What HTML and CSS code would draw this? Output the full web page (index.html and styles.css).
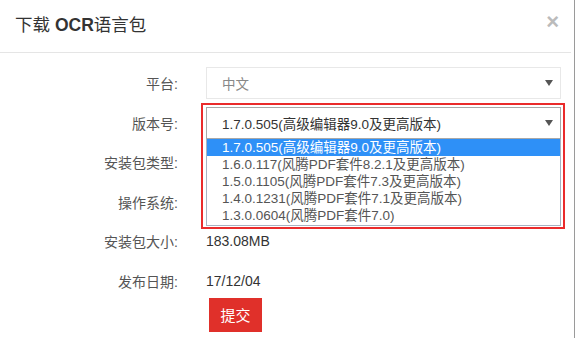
FILE: index.html
```html
<!DOCTYPE html>
<html lang="zh">
<head>
<meta charset="utf-8">
<link rel="stylesheet" href="styles.css">
</head>
<body>
<div class="modal">
  <div class="modal-header">
    <h4 class="title">下载 <b>OCR</b>语言包</h4>
    <span class="close">×</span>
  </div>
  <div class="modal-body">
    <div class="row">
      <span class="label">平台:</span>
      <div class="select muted">中文<i class="caret"></i></div>
    </div>
    <div class="row">
      <span class="label">版本号:</span>
      <div class="field">
        <div class="select open">1.7.0.505(高级编辑器9.0及更高版本)<i class="caret"></i></div>
        <ul class="dropdown">
          <li class="active">1.7.0.505(高级编辑器9.0及更高版本)</li>
          <li>1.6.0.117(风腾PDF套件8.2.1及更高版本)</li>
          <li>1.5.0.1105(风腾PDF套件7.3及更高版本)</li>
          <li>1.4.0.1231(风腾PDF套件7.1及更高版本)</li>
          <li>1.3.0.0604(风腾PDF套件7.0)</li>
        </ul>
        <div class="highlight"></div>
      </div>
    </div>
    <div class="row">
      <span class="label">安装包类型:</span>
      <div class="value"></div>
    </div>
    <div class="row">
      <span class="label">操作系统:</span>
      <div class="value"></div>
    </div>
    <div class="row">
      <span class="label">安装包大小:</span>
      <div class="value">183.08MB</div>
    </div>
    <div class="row">
      <span class="label">发布日期:</span>
      <div class="value">17/12/04</div>
    </div>
    <div class="actions">
      <button class="submit">提交</button>
    </div>
  </div>
</div>
</body>
</html>
```
FILE: styles.css
```css
* { box-sizing: border-box; }
html, body { margin: 0; padding: 0; background: #fff; }
body { width: 576px; height: 338px; overflow: hidden; }
.modal {
  width: 575px;
  height: 338px;
  border-right: 1px solid #9a9a9a;
  font-family: "Liberation Sans", "Noto Sans CJK SC", sans-serif;
  color: #333;
}
.modal-header {
  height: 53px;
  border-bottom: 1px solid #e5e5e5;
  display: flex;
  align-items: center;
  justify-content: space-between;
  padding: 0 12px 0 15px;
  margin-right: 3px;
}
.title {
  margin: 0;
  font-size: 17.5px;
  font-weight: normal;
  color: #333;
  padding-bottom: 5px;
}
.title b { font-weight: bold; }
.close {
  font-size: 22px;
  font-weight: bold;
  color: #bbb;
  line-height: 1;
  padding-bottom: 8px;
}
.modal-body {
  padding-top: 14px;
  display: flex;
  flex-direction: column;
  gap: 7.5px;
}
.row {
  display: grid;
  grid-template-columns: 178px 355px;
  column-gap: 28px;
  align-items: center;
  height: 32px;
}
.label {
  text-align: right;
  font-size: 14px;
  color: #555;
}
.select {
  height: 32px;
  border: 1px solid #e8e8e8;
  display: flex;
  align-items: center;
  justify-content: space-between;
  padding: 0 7px 0 15px;
  font-size: 13.5px;
  color: #333;
}
.select.muted { color: #888; }
.select.open { border-color: #a8a8a8; }
.caret {
  width: 0; height: 0;
  border-left: 4px solid transparent;
  border-right: 4px solid transparent;
  border-top: 6px solid #555;
}
.field { position: relative; }
.dropdown {
  position: absolute;
  left: 0; right: 0;
  top: 32px;
  margin: 0;
  padding: 0;
  list-style: none;
  border: 1px solid #a9b2c2;
  border-top: none;
  background: #fff;
  z-index: 2;
  padding-bottom: 1px;
}
.dropdown li {
  height: 17px;
  line-height: 17px;
  padding-left: 15px;
  font-size: 13.5px;
  color: #555;
  white-space: nowrap;
}
.dropdown li.active {
  background: #2e90f7;
  color: #fff;
}
.highlight {
  position: absolute;
  left: -5px;
  right: -4px;
  top: -4px;
  height: 126px;
  border: 2px solid #ea2b2b;
  z-index: 3;
  pointer-events: none;
}
.value {
  font-size: 14px;
  color: #333;
}
.actions {
  padding-left: 209px;
  margin-top: -6.5px;
}
.submit {
  width: 53px;
  height: 34px;
  border: none;
  background: #e0302a;
  color: #fff;
  font-size: 15px;
  font-family: "Noto Sans CJK SC", sans-serif;
  padding: 0;
}
```
